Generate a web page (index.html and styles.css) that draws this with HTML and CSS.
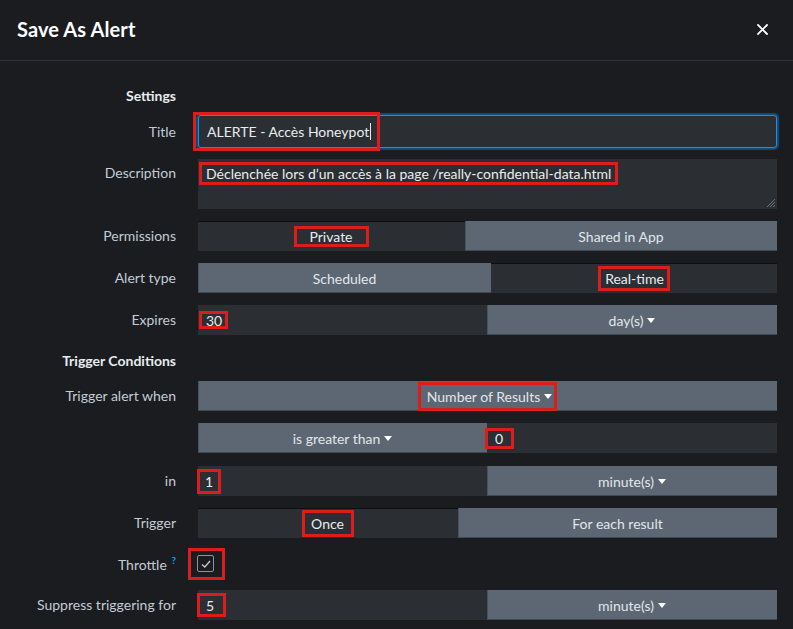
FILE: index.html
```html
<!DOCTYPE html>
<html lang="fr">
<head>
<meta charset="utf-8">
<title>Save As Alert</title>
<link rel="stylesheet" href="styles.css">
</head>
<body>
<div class="modal">
  <header class="hdr">
    <h1 class="hdr-title">Save As Alert</h1>
    <span class="close" aria-label="Close">
      <svg width="11" height="11" viewBox="0 0 11 11"><path d="M1 1L10 10M10 1L1 10" stroke="#ffffff" stroke-width="1.8" stroke-linecap="square"/></svg>
    </span>
  </header>

  <div class="body">
    <div class="row heading"><div class="lbl strong">Settings</div></div>

    <div class="row r-title">
      <div class="lbl">Title</div>
      <div class="ctl field focus">
        <span class="mark m-title">ALERTE - Accès Honeypot<span class="cursor"></span></span>
      </div>
    </div>

    <div class="row r-desc">
      <div class="lbl lbl-top">Description</div>
      <div class="ctl area">
        <span class="mark m-desc">Déclenchée lors d’un accès à la page /really-confidential-data.html</span>
        <svg class="grip" width="10" height="10" viewBox="0 0 10 10"><path d="M9 1L1 9M9 4L4 9M9 7L7 9" stroke="#6b737b" stroke-width="1"/></svg>
      </div>
    </div>

    <div class="row">
      <div class="lbl">Permissions</div>
      <div class="ctl seg seg-perm">
        <div class="opt on"><span class="mark m-private">Private</span></div>
        <div class="opt">Shared in App</div>
      </div>
    </div>

    <div class="row">
      <div class="lbl">Alert type</div>
      <div class="ctl seg seg-type">
        <div class="opt">Scheduled</div>
        <div class="opt on"><span class="mark m-rt">Real-time</span></div>
      </div>
    </div>

    <div class="row">
      <div class="lbl">Expires</div>
      <div class="ctl pair">
        <div class="field"><span class="mark m-30">30</span></div>
        <div class="btn">day(s)<svg class="dd" width="8" height="5" viewBox="0 0 8 5"><path d="M0 0H8L4 5Z" fill="#ffffff"/></svg></div>
      </div>
    </div>

    <div class="row heading h-trigger"><div class="lbl strong">Trigger Conditions</div></div>

    <div class="row r-taw">
      <div class="lbl">Trigger alert when</div>
      <div class="ctl btn"><span class="mark m-nor">Number of Results<svg class="dd" width="8" height="5" viewBox="0 0 8 5"><path d="M0 0H8L4 5Z" fill="#ffffff"/></svg></span></div>
    </div>

    <div class="row">
      <div class="lbl"></div>
      <div class="ctl pair">
        <div class="btn">is greater than<svg class="dd" width="8" height="5" viewBox="0 0 8 5"><path d="M0 0H8L4 5Z" fill="#ffffff"/></svg></div>
        <div class="field"><span class="mark m-0">0</span></div>
      </div>
    </div>

    <div class="row r-in">
      <div class="lbl">in</div>
      <div class="ctl pair">
        <div class="field"><span class="mark m-1">1</span></div>
        <div class="btn">minute(s)<svg class="dd" width="8" height="5" viewBox="0 0 8 5"><path d="M0 0H8L4 5Z" fill="#ffffff"/></svg></div>
      </div>
    </div>

    <div class="row">
      <div class="lbl">Trigger</div>
      <div class="ctl seg seg-trig">
        <div class="opt on"><span class="mark m-once">Once</span></div>
        <div class="opt">For each result</div>
      </div>
    </div>

    <div class="row r-throttle">
      <div class="lbl lbl-throttle">Throttle <sup class="help">?</sup></div>
      <div class="ctl check-wrap">
        <span class="mark m-check">
          <span class="checkbox">
            <svg width="10" height="8" viewBox="0 0 10 8"><path d="M1 4.5L3.8 7L9 1" stroke="#c3cbd4" stroke-width="1.3" fill="none"/></svg>
          </span>
        </span>
      </div>
    </div>

    <div class="row r-sup">
      <div class="lbl">Suppress triggering for</div>
      <div class="ctl pair">
        <div class="field"><span class="mark m-5">5</span></div>
        <div class="btn">minute(s)<svg class="dd" width="8" height="5" viewBox="0 0 8 5"><path d="M0 0H8L4 5Z" fill="#ffffff"/></svg></div>
      </div>
    </div>
  </div>
</div>
</body>
</html>
```

FILE: styles.css
```css
* { box-sizing: border-box; }

html, body {
  margin: 0;
  padding: 0;
  background: #1a1c20;
}

body {
  font-family: Lato, "Open Sans", sans-serif;
  font-size: 14px;
  color: #c3cbd4;
  width: 793px;
  height: 629px;
  overflow: hidden;
}

.modal {
  width: 793px;
}

.hdr {
  height: 61px;
  border-bottom: 1px solid #2b3641;
  display: flex;
  align-items: center;
  justify-content: space-between;
  padding: 0 25px 2px 17px;
}

.hdr-title {
  margin: 0;
  font-size: 20px;
  font-weight: 700;
  color: #ffffff;
  letter-spacing: 0.1px;
}

.close {
  display: flex;
  width: 11px;
  height: 11px;
}

.body {
  padding-top: 25px;
}

.row {
  display: grid;
  grid-template-columns: 176px 579px;
  column-gap: 22px;
  align-items: center;
  min-height: 30px;
  margin-top: 12px;
}

.row.heading {
  min-height: 20px;
  margin-top: 0;
}

.row.r-title { margin-top: 9px; }
.row.r-desc { margin-top: 11px; }
.row.h-trigger { margin-top: 16px; }
.row.r-taw { margin-top: 10px; }
.row.r-in { margin-top: 13px; }
.row.r-throttle { margin-top: 10px; min-height: 31px; }
.row.r-sup { margin-top: 11px; }

.lbl {
  text-align: right;
  line-height: 20px;
  color: #c3cbd4;
  white-space: nowrap;
}

.lbl.strong {
  font-weight: 700;
  color: #e8ecef;
}

.lbl-top {
  align-self: start;
  padding-top: 4px;
}

.lbl-throttle {
  margin-top: -3px;
}

.help {
  color: #1a9cf0;
  font-size: 10px;
  font-weight: 700;
  vertical-align: 6px;
  margin-left: 1px;
}

.ctl {
  height: 30px;
  color: #e8ecef;
}

.field {
  background: #2b2f33;
  display: flex;
  align-items: center;
  height: 30px;
  padding-left: 0;
  overflow: visible;
}

.field.focus {
  height: 33px;
  border: 1px solid #1d8fe0;
  border-radius: 3px;
  box-shadow: 0 0 1px 2px #0c4f80;
}

.area {
  position: relative;
  height: 50px;
  background: #2b2f33;
  padding-top: 3px;
}

.grip {
  position: absolute;
  right: 1px;
  bottom: 1px;
}

.seg {
  display: flex;
}

.seg .opt {
  display: flex;
  align-items: center;
  justify-content: center;
  height: 30px;
  background: #5c6773;
  color: #e1e6ea;
  box-shadow: inset 0 -1px 0 #414a53, inset 1px 0 0 #4a535d;
}

.seg .opt.on {
  background: #2b2f33;
  color: #e8ecef;
  box-shadow: inset 0 1px 0 #0c0e10;
}

.seg-perm .opt:first-child { width: 267px; }
.seg-perm .opt:last-child { flex: 1; }
.seg-type .opt:first-child { width: 293px; }
.seg-type .opt:last-child { flex: 1; }
.seg-trig .opt:first-child { width: 260px; }
.seg-trig .opt:last-child { flex: 1; }

.pair {
  display: grid;
  grid-template-columns: 289px 290px;
}

.btn {
  display: flex;
  align-items: center;
  justify-content: center;
  height: 30px;
  background: #5c6773;
  color: #e1e6ea;
  box-shadow: inset 0 -1px 0 #414a53, inset 1px 0 0 #4a535d;
}

.dd {
  margin-left: 4px;
  flex: none;
}

/* red annotation boxes */
.mark {
  display: inline-flex;
  align-items: center;
  border: 3px solid #dc1d1d;
  white-space: nowrap;
}

.m-title {
  height: 39px;
  margin-left: -6px;
  padding: 0 6px 0 11px;
}

.cursor {
  display: inline-block;
  width: 1px;
  height: 17px;
  background: #e8ecef;
  margin-left: 1px;
}

.m-desc {
  height: 23px;
  margin-left: 1px;
  padding: 0 4px;
}

.m-private { height: 21px; padding: 0 13px 0 12px; }
.m-rt { height: 25px; padding: 0 3px 0 4px; }
.m-30 { height: 18px; margin-left: 1px; padding: 0 3px 0 4px; }
.m-nor { height: 29px; padding: 0 2px 0 6px; }
.m-0 { height: 21px; margin-left: -2px; padding: 0 8px 0 7px; }
.m-1 { height: 25px; margin-left: -1px; padding: 0 5px; }
.m-once { height: 27px; padding: 0 7px 0 6px; }
.m-5 { height: 24px; margin-left: -1px; padding: 0 9px 0 6px; }

.check-wrap {
  display: flex;
  align-items: center;
  height: 31px;
}

.m-check {
  height: 32px;
  margin-left: -10px;
  padding: 0 8px 0 6px;
}

.checkbox {
  display: flex;
  align-items: center;
  justify-content: center;
  width: 17px;
  height: 17px;
  border: 1px solid #8b949d;
  border-radius: 2px;
  background: #1a1c20;
}
```
